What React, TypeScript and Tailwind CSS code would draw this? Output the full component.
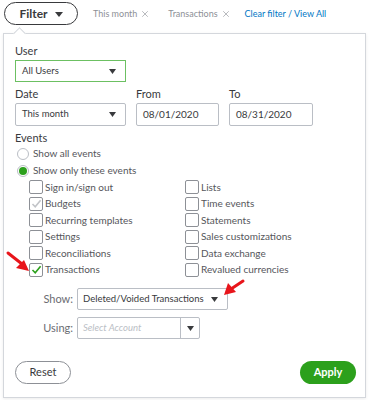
import { X } from "lucide-react";

const left = ["Sign in/sign out", "Budgets", "Recurring templates", "Settings", "Reconciliations", "Transactions"];
const right = ["Lists", "Time events", "Statements", "Sales customizations", "Data exchange", "Revalued currencies"];

function Caret({ className = "", w = 7 }: { className?: string; w?: number }) {
  return (
    <svg width={w} height="5" viewBox={`0 0 ${w} 5`} className={className}>
      <path d={`M0 0h${w}L${w / 2} 5z`} fill="#393a3d" />
    </svg>
  );
}

function Check({ color }: { color: string }) {
  return (
    <svg width="11" height="11" viewBox="0 0 11 11">
      <path d="M1.5 6l2.7 2.7L9.6 2.2" fill="none" stroke={color} strokeWidth="1.6" />
    </svg>
  );
}

function Box({ label, state }: { label: string; state?: "gray" | "green" }) {
  return (
    <div className="flex h-[16.5px] items-center">
      <div className="flex h-[14px] w-[14px] items-center justify-center rounded-[2px] border border-[#8d9096] bg-white">
        {state === "gray" && <Check color="#c2c4c8" />}
        {state === "green" && <Check color="#2ca01c" />}
      </div>
      <span className="ml-[2px] text-[10px] text-[#55565b]">{label}</span>
    </div>
  );
}

export default function App() {
  return (
    <div className="relative h-[400px] w-[369px] overflow-hidden bg-white font-['Lato',sans-serif] text-[#393a3d]">
      {/* filter bar */}
      <div className="flex h-[26px] items-center pl-[4px] pt-[1px]">
        <div className="flex h-[23px] w-[74px] items-center justify-center gap-[7px] rounded-full border-[1.5px] border-[#393a3d]">
          <span className="text-[12px] font-bold">Filter</span>
          <Caret className="mt-[1px]" w={8} />
        </div>
        <span className="ml-[15px] text-[9px] text-[#8d9096]">This month</span>
        <X className="ml-[3px] h-[10px] w-[10px] text-[#8d9096]" strokeWidth={1.5} />
        <span className="ml-[18px] text-[9px] text-[#8d9096]">Transactions</span>
        <X className="ml-[3px] h-[10px] w-[10px] text-[#8d9096]" strokeWidth={1.5} />
        <span className="ml-[14px] text-[9px] text-[#0077c5]">Clear filter / View All</span>
      </div>

      {/* popover */}
      <div className="relative ml-[3px] mt-[7px] h-[365px] w-[363px] border border-[#d4d7dc] bg-white pl-[11px] pt-[10px] shadow-[0_1px_3px_rgba(0,0,0,0.08)]">
        <div className="absolute -top-[5px] left-[11px] h-[9px] w-[9px] rotate-45 border-l border-t border-[#d4d7dc] bg-white" />

        <div className="h-[14px] text-[11px] leading-[14px]">User</div>
        <div className="mt-[2px] flex h-[22px] w-[111px] items-center justify-between border border-[#6cc062] pl-[6px] pr-[9px]">
          <span className="text-[9.5px]">All Users</span>
          <Caret />
        </div>

        <div className="mt-[5px] flex gap-[10px]">
          <div className="w-[111px]">
            <div className="h-[14px] text-[11px] leading-[14px]">Date</div>
            <div className="mt-[2px] flex h-[23px] items-center justify-between rounded-[2px] border border-[#babec5] pl-[6px] pr-[9px]">
              <span className="text-[9.5px]">This month</span>
              <Caret />
            </div>
          </div>
          <div className="w-[83px]">
            <div className="h-[14px] text-[11px] leading-[14px]">From</div>
            <div className="mt-[2px] flex h-[23px] items-center rounded-[2px] border border-[#babec5] pl-[6px]">
              <span className="text-[10px]">08/01/2020</span>
            </div>
          </div>
          <div className="w-[84px]">
            <div className="h-[14px] text-[11px] leading-[14px]">To</div>
            <div className="mt-[2px] flex h-[23px] items-center rounded-[2px] border border-[#babec5] pl-[6px]">
              <span className="text-[10px]">08/31/2020</span>
            </div>
          </div>
        </div>

        <div className="mt-[5px] h-[14px] text-[11px] leading-[14px]">Events</div>
        <div className="flex h-[17px] items-center pl-[2px]">
          <div className="h-[12px] w-[12px] rounded-full border border-[#babec5]" />
          <span className="ml-[4px] text-[10px] text-[#55565b]">Show all events</span>
        </div>
        <div className="flex h-[17px] items-center pl-[2px]">
          <div className="flex h-[12px] w-[12px] items-center justify-center rounded-full border border-[#babec5]">
            <div className="h-[8px] w-[8px] rounded-full bg-[#2ca01c]" />
          </div>
          <span className="ml-[4px] text-[10px] text-[#55565b]">Show only these events</span>
        </div>

        <div className="flex pl-[14px]">
          <div className="w-[156px]">
            {left.map((l) => (
              <Box key={l} label={l} state={l === "Budgets" ? "gray" : l === "Transactions" ? "green" : undefined} />
            ))}
          </div>
          <div>
            {right.map((r) => (
              <Box key={r} label={r} />
            ))}
          </div>
        </div>

        <div className="mt-[10px] flex items-center gap-[4px]">
          <span className="w-[58px] text-right text-[11px] text-[#6b6c72]">Show:</span>
          <div className="flex h-[22px] w-[151px] items-center justify-between rounded-[2px] border border-[#babec5] pl-[5px] pr-[9px]">
            <span className="text-[9.5px]">Deleted/Voided Transactions</span>
            <Caret />
          </div>
        </div>
        <div className="mt-[7px] flex items-center gap-[4px]">
          <span className="w-[58px] text-right text-[11px] text-[#6b6c72]">Using:</span>
          <div className="flex h-[22px] w-[123px] items-center rounded-[2px] border border-[#babec5]">
            <span className="w-[102px] pl-[5px] text-[9.5px] italic text-[#babec5]">Select Account</span>
            <div className="flex h-full flex-1 items-center justify-center border-l border-[#babec5]">
              <Caret />
            </div>
          </div>
        </div>

        <div className="mt-[22px] flex items-center justify-between pr-[9px]">
          <div className="flex h-[23px] w-[56px] items-center justify-center rounded-full border border-[#8d9096] text-[11px]">
            Reset
          </div>
          <div className="flex h-[23px] w-[56px] items-center justify-center rounded-full bg-[#2ca01c] text-[11px] font-bold text-white">
            Apply
          </div>
        </div>
      </div>

      {/* red annotation arrows */}
      <svg className="pointer-events-none absolute left-0 top-0" width="369" height="400">
        <path d="M8 253L22 264" stroke="#e8151b" strokeWidth="3" strokeLinecap="round" />
        <path d="M29 271L16 268L24 260z" fill="#e8151b" />
        <path d="M243 281L231 289" stroke="#e8151b" strokeWidth="3" strokeLinecap="round" />
        <path d="M224 295L228 283L236 292z" fill="#e8151b" />
      </svg>
    </div>
  );
}
